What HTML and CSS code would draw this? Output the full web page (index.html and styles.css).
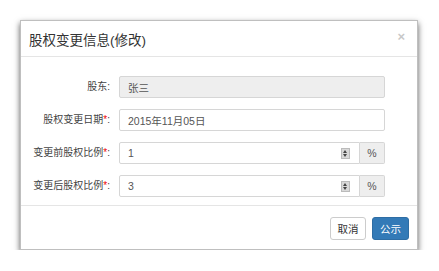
FILE: index.html
```html
<!DOCTYPE html>
<html lang="zh">
<head>
    <meta charset="UTF-8">
    <title>股权变更信息(修改)</title>
    <link rel="stylesheet" href="styles.css">
</head>
<body>
    <div class="modal">
        <div class="modal-header">
            <h4 class="modal-title">股权变更信息(修改)</h4>
            <span class="close">×</span>
        </div>
        <div class="modal-body">
            <div class="form-row">
                <label class="form-label">股东:</label>
                <div class="form-control readonly">张三</div>
            </div>
            <div class="form-row">
                <label class="form-label">股权变更日期<i class="req">*</i>:</label>
                <div class="form-control">2015年11月05日</div>
            </div>
            <div class="form-row">
                <label class="form-label">变更前股权比例<i class="req">*</i>:</label>
                <div class="input-group">
                    <div class="form-control number">1<span class="spin"></span></div>
                    <span class="addon">%</span>
                </div>
            </div>
            <div class="form-row">
                <label class="form-label">变更后股权比例<i class="req">*</i>:</label>
                <div class="input-group">
                    <div class="form-control number">3<span class="spin"></span></div>
                    <span class="addon">%</span>
                </div>
            </div>
        </div>
        <div class="modal-footer">
            <button class="btn">取消</button>
            <button class="btn btn-primary">公示</button>
        </div>
    </div>
</body>
</html>
```

FILE: styles.css
```css
body {
    margin: 0;
    background: #fff;
    font-family: "Liberation Sans", "Noto Sans CJK SC", sans-serif;
    color: #333;
}
.modal {
    margin: 20px 0 0 20px;
    width: 398px;
    height: 230px;
    box-sizing: border-box;
    background: #fff;
    border: 1px solid rgba(0, 0, 0, 0.25);
    box-shadow: 0 3px 6px rgba(0, 0, 0, 0.65);
    display: flex;
    flex-direction: column;
}
.modal-header {
    height: 36px;
    box-sizing: border-box;
    padding: 0 12px 0 8px;
    border-bottom: 1px solid #e5e5e5;
    display: flex;
    align-items: center;
    justify-content: space-between;
}
.modal-title {
    margin: 0;
    font-size: 13.5px;
    font-weight: normal;
    color: #333;
}
.close {
    font-size: 13px;
    font-weight: bold;
    color: #c8c8c8;
    margin-top: -4px;
}
.modal-body {
    padding: 19px 0 8px 0;
    display: flex;
    flex-direction: column;
    gap: 11px;
    border-bottom: 1px solid #e5e5e5;
}
.form-row {
    display: flex;
    align-items: center;
    height: 22px;
}
.form-label {
    width: 89px;
    margin-right: 9px;
    text-align: right;
    font-size: 10px;
    color: #444;
    margin-top: -3px;
}
.req {
    font-style: normal;
    color: #e00;
}
.form-control {
    width: 266px;
    height: 22px;
    box-sizing: border-box;
    border: 1px solid #d6d6d6;
    border-radius: 2px;
    padding: 0 8px;
    font-size: 10.5px;
    color: #555;
    display: flex;
    align-items: center;
}
.readonly {
    background: #eee;
}
.input-group {
    display: flex;
    width: 266px;
}
.input-group .form-control {
    width: 241px;
    border-radius: 2px 0 0 2px;
    justify-content: space-between;
    padding-right: 9px;
}
.spin {
    width: 7px;
    height: 9px;
    background: #d9d9d9;
    border: 1px solid #bbb;
    position: relative;
}
.spin::before, .spin::after {
    content: "";
    position: absolute;
    left: 1px;
    border-left: 2.5px solid transparent;
    border-right: 2.5px solid transparent;
}
.spin::before {
    top: 1px;
    border-bottom: 3px solid #444;
}
.spin::after {
    bottom: 1px;
    border-top: 3px solid #444;
}
.addon {
    width: 25px;
    height: 22px;
    box-sizing: border-box;
    background: #eee;
    border: 1px solid #d6d6d6;
    border-left: none;
    border-radius: 0 2px 2px 0;
    font-size: 10.5px;
    color: #555;
    display: flex;
    align-items: center;
    justify-content: center;
}
.modal-footer {
    flex: 1;
    display: flex;
    justify-content: flex-end;
    align-items: flex-start;
    gap: 6px;
    padding: 11px 8px 0 0;
}
.btn {
    height: 23px;
    width: 36px;
    padding: 0;
    background: #fff;
    border: 1px solid #ccc;
    border-radius: 3px;
    font-family: inherit;
    font-size: 10.5px;
    color: #333;
}
.btn-primary {
    width: 37px;
    background: #337ab7;
    border-color: #2e6da4;
    color: #fff;
}
```
